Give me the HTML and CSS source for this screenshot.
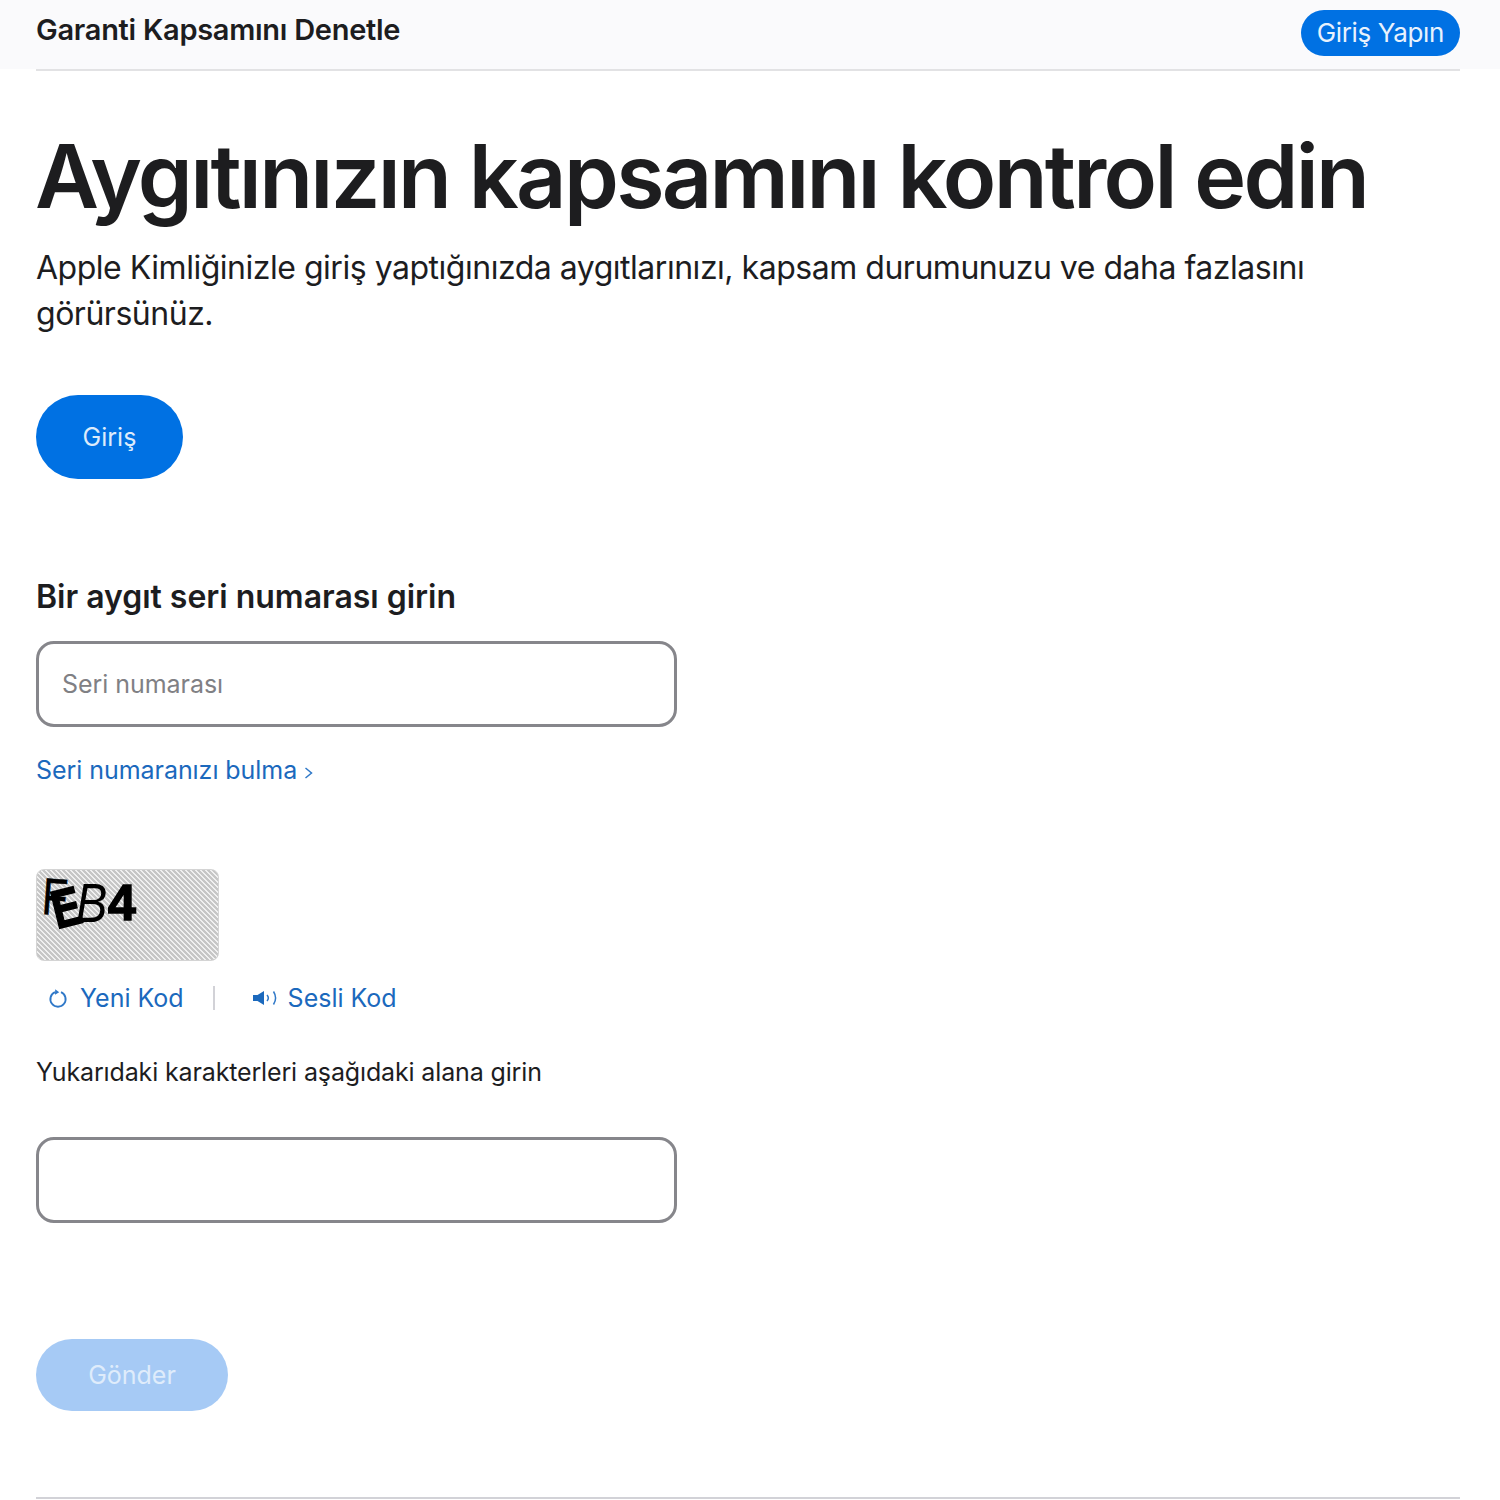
FILE: index.html
```html
<!DOCTYPE html>
<html lang="tr">
<head>
  <meta charset="UTF-8">
  <title>Garanti Kapsamını Denetle</title>
  <link rel="stylesheet" href="styles.css">
</head>
<body>

  <div class="topbar">
    <div class="topbar-inner">
      <span class="topbar-title">Garanti Kapsamını Denetle</span>
      <a class="signin-pill" href="#">Giriş Yapın</a>
    </div>
  </div>

  <div class="page">
    <h1>Aygıtınızın kapsamını kontrol edin</h1>
    <p class="lead">Apple Kimliğinizle giriş yaptığınızda aygıtlarınızı, kapsam durumunuzu ve daha fazlasını görürsünüz.</p>

    <button class="btn-signin">Giriş</button>

    <h2>Bir aygıt seri numarası girin</h2>
    <input class="field" type="text" placeholder="Seri numarası">
    <a class="find-link" href="#">Seri numaranızı bulma <svg class="chev" width="9" height="12" viewBox="0 0 9 12"><path d="M1.5 1l6 5-6 5" fill="none" stroke="#2f78c8" stroke-width="1.5"/></svg></a>

    <div class="captcha">
      <span class="cap-char cap-f">F</span>
      <span class="cap-char cap-e">E</span>
      <span class="cap-char cap-b">B</span>
      <span class="cap-char cap-4">4</span>
    </div>

    <div class="captcha-links">
      <a class="cap-link" href="#">
        <svg class="ico-refresh" width="20" height="20" viewBox="0 0 20 20"><path d="M7 4.1a7.6 7.6 0 1 0 6 0" fill="none" stroke="#2f78c8" stroke-width="1.9"/><path d="M7.2 1.2l4 3-4.2 2.6z" fill="#2f78c8"/></svg>
        Yeni Kod
      </a>
      <span class="cap-sep"></span>
      <a class="cap-link" href="#">
        <svg class="ico-sound" width="25" height="18" viewBox="0 0 25 18"><path d="M0 6h4.5L11 2v14l-6.5-4H0z" fill="#1b69bd"/><path d="M14 6a4.5 4.5 0 0 1 0 6" fill="none" stroke="#2f78c8" stroke-width="1.5"/><path d="M20.5 2.5a12 12 0 0 1 0 13" fill="none" stroke="#2f78c8" stroke-width="1.5"/></svg>
        Sesli Kod
      </a>
    </div>

    <p class="cap-hint">Yukarıdaki karakterleri aşağıdaki alana girin</p>
    <input class="field field-code" type="text">

    <button class="btn-send" disabled>Gönder</button>

    <div class="footer-line"></div>
  </div>

</body>
</html>
```

FILE: styles.css
```css
* {
  margin: 0;
  padding: 0;
  box-sizing: border-box;
}

body {
  font-family: 'Inter', 'Liberation Sans', sans-serif;
  background-color: #ffffff;
  color: #1d1d1f;
  height: 1500px;
  overflow: hidden;
}

a {
  text-decoration: none;
}

.topbar {
  background-color: #fafafc;
  height: 69px;
  padding: 0 40px 0 36px;
}

.topbar-inner {
  height: 71px;
  display: flex;
  justify-content: space-between;
  align-items: flex-start;
  border-bottom: 2px solid #e2e2e4;
}

.topbar-title {
  font-size: 29px;
  font-weight: 600;
  line-height: 36px;
  margin-top: 12px;
  letter-spacing: -0.28px;
}

.signin-pill {
  margin-top: 10px;
  height: 46px;
  padding: 0 16px;
  border-radius: 23px;
  background-color: #0071e3;
  color: #e8f2fd;
  font-size: 26px;
  line-height: 45px;
  letter-spacing: -0.35px;
}

.page {
  padding: 0 40px 0 36px;
}

h1 {
  font-size: 88px;
  font-weight: 600;
  line-height: 100px;
  letter-spacing: -2.7px;
  margin-top: 57px;
  margin-left: -1px;
  white-space: nowrap;
}

.lead {
  font-size: 32px;
  line-height: 46px;
  letter-spacing: -0.48px;
  margin-top: 19px;
  max-width: 1300px;
}

.btn-signin {
  display: block;
  width: 147px;
  height: 84px;
  margin-top: 58px;
  border: none;
  border-radius: 42px;
  background-color: #0071e3;
  color: #dcebfb;
  font-family: inherit;
  font-size: 25px;
}

h2 {
  font-size: 32px;
  font-weight: 600;
  line-height: 40px;
  letter-spacing: -0.02px;
  margin-top: 98px;
}

.field {
  display: block;
  width: 641px;
  height: 86px;
  margin-top: 24px;
  padding: 0 23px;
  border: 3px solid #86868b;
  border-radius: 18px;
  background-color: #ffffff;
  font-family: inherit;
  font-size: 25px;
  letter-spacing: -0.05px;
}

.field::placeholder {
  color: #808084;
  opacity: 1;
}

.find-link {
  display: block;
  margin-top: 25px;
  color: #1b69bd;
  font-size: 25px;
  line-height: 36px;
  letter-spacing: -0.05px;
}

.captcha {
  position: relative;
  width: 183px;
  height: 92px;
  margin-top: 81px;
  border: 1px solid #d4d4d4;
  border-radius: 8px;
  background: repeating-linear-gradient(45deg, #c6c6c6 0, #c6c6c6 1.7678px, #f0f0f0 1.7678px, #f0f0f0 3.5355px);
}

.cap-char {
  position: absolute;
  color: #000000;
  font-family: 'Liberation Sans', sans-serif;
  line-height: 1;
}

.cap-f {
  left: 7px;
  top: 0;
  font-size: 52px;
  -webkit-text-stroke: 0.5px #000000;
  transform: rotate(4deg) scaleX(0.8);
  transform-origin: left top;
}

.cap-e {
  left: 11px;
  top: 10px;
  font-size: 54px;
  font-weight: 700;
  -webkit-text-stroke: 1.5px #000000;
  transform: rotate(-14deg) scaleX(0.8);
}

.cap-b {
  left: 39px;
  top: 9px;
  font-size: 47px;
  font-style: italic;
  transform: scaleY(1.18);
}

.cap-4 {
  left: 71px;
  top: 8px;
  font-size: 50px;
  font-weight: 700;
  -webkit-text-stroke: 1.5px #000000;
}

.captcha-links {
  display: flex;
  align-items: center;
  margin-top: 18px;
  padding-left: 12px;
  height: 38px;
}

.cap-link {
  display: flex;
  align-items: center;
  color: #1b69bd;
  font-size: 25px;
}

.ico-refresh {
  margin-right: 12px;
}

.ico-sound {
  margin-right: 10px;
}

.cap-sep {
  width: 2px;
  height: 24px;
  margin: 0 38px 0 29px;
  background-color: #d2d2d7;
}

.cap-hint {
  font-size: 25px;
  line-height: 36px;
  letter-spacing: -0.14px;
  margin-top: 37px;
}

.field-code {
  margin-top: 47px;
}

.btn-send {
  display: block;
  width: 192px;
  height: 72px;
  margin-top: 116px;
  border: none;
  border-radius: 36px;
  background-color: #a6caf5;
  color: #dfecfb;
  font-family: inherit;
  font-size: 25px;
}

.footer-line {
  height: 2px;
  margin-top: 86px;
  background-color: #d2d2d7;
}
```
